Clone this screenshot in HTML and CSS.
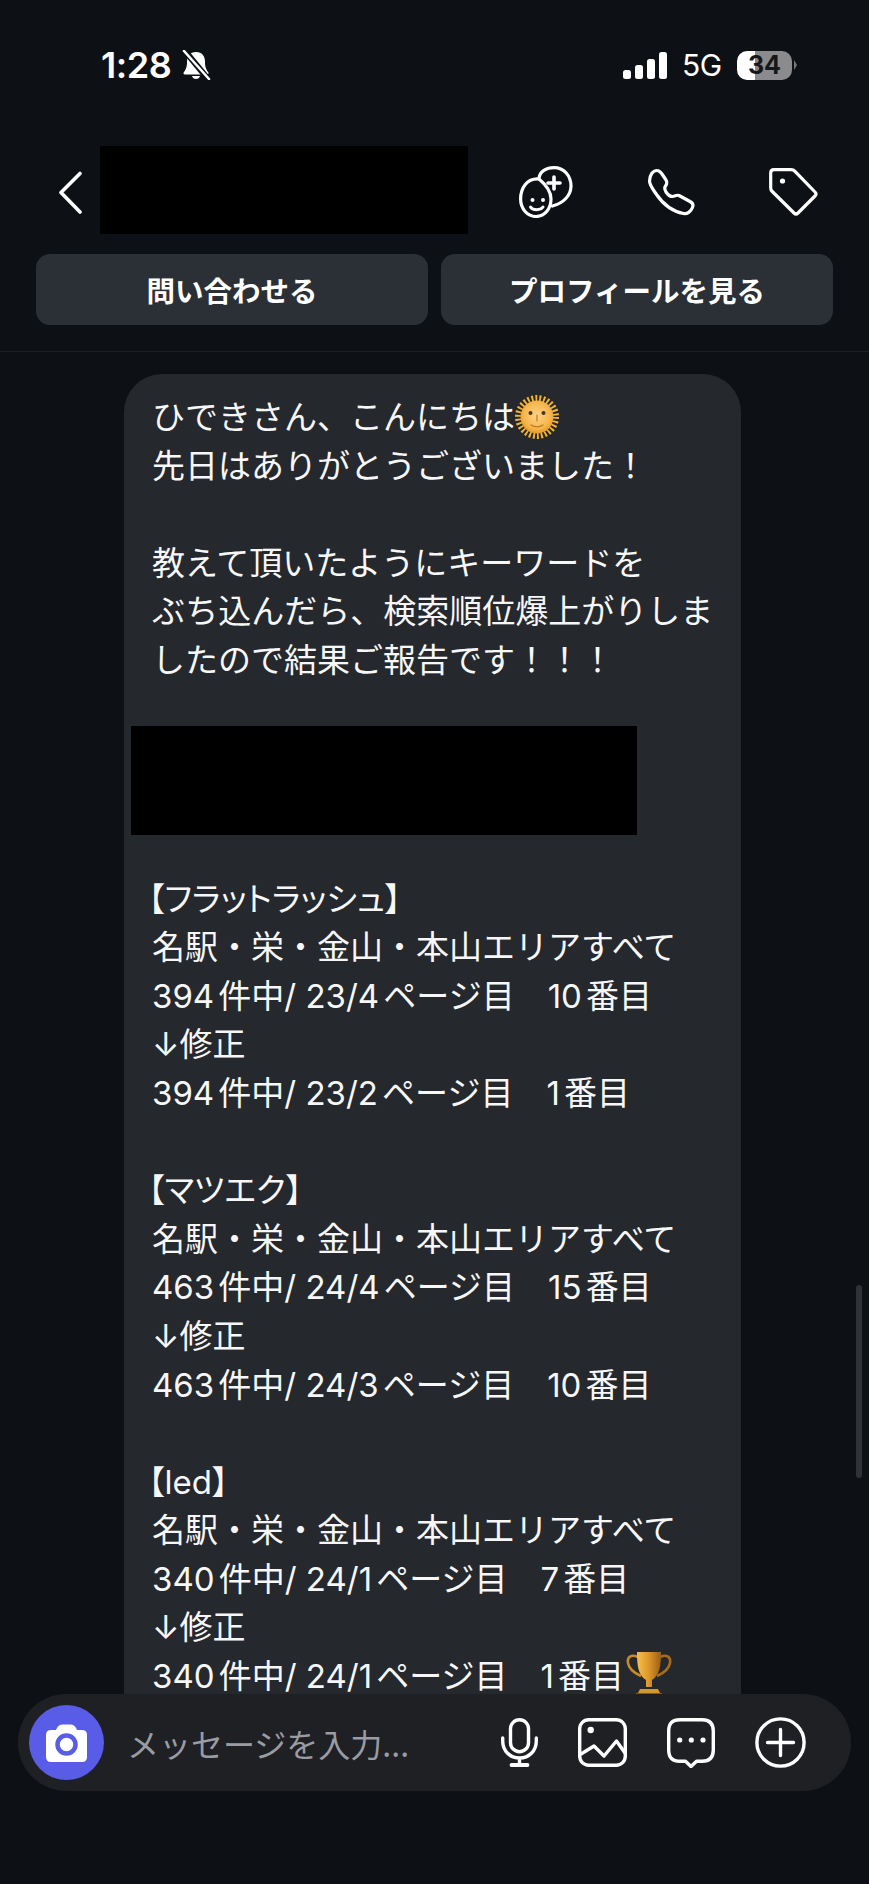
FILE: index.html
```html
<!DOCTYPE html>
<html lang="ja">
<head>
<meta charset="utf-8">
<title>メッセージ</title>
<link rel="stylesheet" href="styles.css">
</head>
<body>
<div class="phone">
  <div class="status">
    <div class="status-left">
      <span class="clock">1:28</span>
      <svg class="bell" viewBox="0 0 30 30"><path d="M15 2c-6 0-9 4-9 10 0 5-1 7-3 10-1 1-.5 2.500 1 2.500h22c1.500 0 2-1.500 1-2.500-2-3-3-5-3-10 0-6-3-10-9-10z" fill="#fff"/><path d="M11 26c.5 2 2 3 4 3s3.500-1 4-3z" fill="#fff"/><path d="M4 1l23 28" stroke="#0d1014" stroke-width="6"/><path d="M3 1l25 28" stroke="#fff" stroke-width="2.600" stroke-linecap="round"/></svg>
    </div>
    <div class="status-right">
      <div class="signal"><i class="b1"></i><i class="b2"></i><i class="b3"></i><i class="b4"></i></div>
      <span class="net">5G</span>
      <div class="battery"><span class="battery-level">34</span></div>
      <span class="battery-tip"></span>
    </div>
  </div>

  <div class="nav">
    <svg class="chevron" viewBox="0 0 24 43"><path d="M22 2.500 3 21.500 22 41" fill="none" stroke="#fff" stroke-width="3.600" stroke-linecap="round" stroke-linejoin="round"/></svg>
    <div class="redact-name"></div>
    <div class="nav-icons">
      <svg class="ic-double" viewBox="0 0 54 52" fill="none" stroke="#fff" stroke-width="3.200" stroke-linecap="round"><path d="M20 13C8 12 1.600 22 1.600 33c0 10 7 17.500 15.400 17.500 9 0 15-8 15-17.500 0-9-6-15-12-20z"/><path d="M20 13c0-8 8-11.400 15-11.400C45 1.600 52 10 52 20c0 9-7 17-18.500 20"/><path d="M35 11v12M29 17h12" stroke-width="3.600"/><path d="M11.500 41c2 3.500 10 3.500 12.500 0" stroke-width="3"/><circle cx="13.500" cy="34" r="2" fill="#fff" stroke="none"/><circle cx="24" cy="34" r="2" fill="#fff" stroke="none"/></svg>
      <svg class="ic-phone" viewBox="0 0 48 48" fill="none" stroke="#fff" stroke-width="3.200" stroke-linejoin="round"><path d="M2.500 13C2.500 7 6 2.500 10 2.500c2 0 3.500 1.500 5 3.500l4 6c1.500 2.500 1 4-.5 6-1.500 2-1 3.500.5 6 2 3 4 4.500 6.500 4.500 2.500 0 4-2 6.500-1l11 6c3 1.500 3.500 3.500 2.500 6-1.500 4-5.500 7-9 6C26 43.500 16 36 9.500 26.500 5 20 2.500 17 2.500 13z"/></svg>
      <svg class="ic-tag" viewBox="0 0 49 48" fill="none" stroke="#fff" stroke-width="3.200" stroke-linejoin="round"><path d="M5 1.700h17q2.500 0 4 1.600l20 20.700q2 2 0 4L29 45q-2 2-4 0L3.300 23.500Q1.700 22 1.700 20V5Q1.700 1.700 5 1.700z"/><circle cx="13.500" cy="13" r="2.600" fill="#fff" stroke="none"/></svg>
    </div>
  </div>

  <div class="actions">
    <button class="action">問い合わせる</button>
    <button class="action">プロフィールを見る</button>
  </div>

  <div class="thread">
    <div class="bubble">
      <div class="line">ひできさん、こんにちは<svg class="sun" viewBox="0 0 44 44"><defs><radialGradient id="sunFace" cx=".5" cy=".45" r=".55"><stop offset="0" stop-color="#fdd487"/><stop offset=".75" stop-color="#f6b54a"/><stop offset="1" stop-color="#e89a22"/></radialGradient></defs><circle cx="22" cy="22" r="19" fill="none" stroke="#f5b42d" stroke-width="6" stroke-dasharray="1.900 2.070"/><circle cx="22" cy="22" r="16.500" fill="url(#sunFace)"/><circle cx="15.500" cy="18" r="2" fill="#4a3420"/><circle cx="28.500" cy="18" r="2" fill="#4a3420"/><path d="M22 20v6M16 30c3.500 2.500 8.500 2.500 12 0" fill="none" stroke="#b97a2a" stroke-width="1.200" stroke-linecap="round"/></svg></div>
      <div class="line">先日はありがとうございました！</div>
      <div class="line"></div>
      <div class="line">教えて頂いたようにキーワードを</div>
      <div class="line">ぶち込んだら、検索順位爆上がりしま</div>
      <div class="line">したので結果ご報告です！！！</div>
      <div class="redact-block"></div>
      <div class="line"><span class="tight heading">【フラットラッシュ】</span></div>
      <div class="line">名駅・栄・金山・本山エリアすべて</div>
      <div class="line">394件中/ 23/4ページ目　10番目</div>
      <div class="line">↓修正</div>
      <div class="line">394件中/ 23/2ページ目　1番目</div>
      <div class="line"></div>
      <div class="line"><span class="tight heading">【マツエク】</span></div>
      <div class="line">名駅・栄・金山・本山エリアすべて</div>
      <div class="line">463件中/ 24/4ページ目　15番目</div>
      <div class="line">↓修正</div>
      <div class="line">463件中/ 24/3ページ目　10番目</div>
      <div class="line"></div>
      <div class="line"><span class="tight heading">【led】</span></div>
      <div class="line">名駅・栄・金山・本山エリアすべて</div>
      <div class="line">340件中/ 24/1ページ目　7番目</div>
      <div class="line">↓修正</div>
      <div class="line">340件中/ 24/1ページ目　1番目<svg class="trophy" viewBox="0 0 46 46"><defs><linearGradient id="gold" x1="0" x2="1" y1="0" y2="0"><stop offset="0" stop-color="#f2c14e"/><stop offset=".45" stop-color="#e09a2c"/><stop offset="1" stop-color="#9c5f14"/></linearGradient></defs><path d="M12 6C5 3 1 6 2 12c1 6 6 10 13 13" fill="none" stroke="#c98a24" stroke-width="2.600"/><path d="M34 6c7-3 11 0 10 6-1 6-6 10-13 13" fill="none" stroke="#a96d1a" stroke-width="2.600"/><path d="M11 1h24c0 13-1 23-9 28v7h-6v-7C12 24 11 14 11 1z" fill="url(#gold)"/><path d="M14 38h18l2 4H12z" fill="#d9962a"/><rect x="10" y="42" width="26" height="4" fill="#8c5313"/></svg></div>
    </div>
  </div>

  <div class="scrollbar"></div>

  <div class="composer">
    <div class="camera">
      <svg class="camera-ic" viewBox="0 0 41 38"><path d="M5 6h5c1-3 3-5.500 6-5.500h9c3 0 5 2.500 6 5.500h5q5 0 5 5v22q0 5-5 5H5q-5 0-5-5V11q0-5 5-5z" fill="#fff"/><circle cx="20.500" cy="20.500" r="9" fill="#fff" stroke="#585ce6" stroke-width="4.500"/></svg>
    </div>
    <span class="placeholder">メッセージを入力...</span>
    <div class="composer-icons">
      <svg class="ic-mic" viewBox="0 0 37 49" fill="none" stroke="#fff" stroke-width="3.400" stroke-linecap="round"><rect x="9.500" y="1.700" width="18" height="32" rx="9"/><path d="M1.700 20v3c0 10 7.300 17 16.800 17s16.800-7 16.800-17v-3M18.500 40v7"/><path d="M10.500 47h16" stroke-width="3.800"/></svg>
      <svg class="ic-img" viewBox="0 0 49 49" fill="none" stroke="#fff" stroke-width="3.400" stroke-linejoin="round" stroke-linecap="round"><rect x="1.700" y="1.700" width="45.600" height="45.600" rx="9"/><circle cx="12.700" cy="12" r="3.200" fill="#fff" stroke="none"/><path d="M3 36l13-8 10 10 12.500-15L47 35"/></svg>
      <svg class="ic-chat" viewBox="0 0 48 50" fill="none" stroke="#fff" stroke-width="3.400" stroke-linejoin="round"><path d="M13 1.700h22Q46.300 1.700 46.300 13v19Q46.300 43.300 35 43.300h-5.500L24 48.500l-5.500-5.200H13Q1.700 43.300 1.700 32V13Q1.700 1.700 13 1.700z"/><circle cx="12.700" cy="22" r="2.600" fill="#fff" stroke="none"/><circle cx="24.300" cy="22" r="2.600" fill="#fff" stroke="none"/><circle cx="36" cy="22" r="2.600" fill="#fff" stroke="none"/></svg>
      <svg class="ic-plus" viewBox="0 0 51 51" fill="none" stroke="#fff" stroke-width="3.400" stroke-linecap="round"><circle cx="25.500" cy="25.500" r="23.600"/><path d="M25.500 12.500v26M12.500 25.500h26"/></svg>
    </div>
  </div>
</div>
</body>
</html>
```

FILE: styles.css
```css
* { box-sizing: border-box; }
html, body { margin: 0; padding: 0; background: #0d1014; }
body { font-family: "Inter", "Noto Sans CJK JP", sans-serif; color: #fff; }
svg { display: block; flex: none; }

.phone {
  position: relative;
  width: 869px;
  height: 1884px;
  overflow: hidden;
  display: flex;
  flex-direction: column;
  background: #0d1014;
}

/* status bar */
.status {
  height: 130px;
  flex: none;
  display: flex;
  align-items: center;
  justify-content: space-between;
  padding: 0 72px 0 101px;
}
.status-left { display: flex; align-items: center; gap: 10px; }
.clock { font-size: 36px; font-weight: 600; letter-spacing: -0.5px; }
.bell { width: 30px; height: 30px; }
.status-right { display: flex; align-items: center; }
.signal { display: flex; align-items: flex-end; gap: 4px; height: 27px; margin-right: 15px; }
.signal i { display: block; width: 8px; background: #fff; border-radius: 2.500px; }
.signal .b1 { height: 9px; }
.signal .b2 { height: 14px; }
.signal .b3 { height: 20px; }
.signal .b4 { height: 27px; }
.net { font-size: 30px; font-weight: 400; width: 38px; margin-right: 17px; letter-spacing: -0.5px; }
.battery {
  width: 55px;
  height: 29px;
  border-radius: 10px;
  background: linear-gradient(90deg, #fff 0, #fff 33%, #8b8b8d 33%, #8b8b8d 100%);
  display: flex;
  align-items: center;
  justify-content: center;
}
.battery-level { font-size: 25px; font-weight: 700; color: #16171a; line-height: 1; }
.battery-tip {
  width: 0;
  height: 0;
  margin-left: 2px;
  border-left: 3px solid #77777a;
  border-top: 5px solid transparent;
  border-bottom: 5px solid transparent;
}

/* navigation */
.nav {
  flex: none;
  height: 108px;
  padding: 16px 51px 0 58px;
  display: flex;
  align-items: center;
}
.chevron { width: 24px; height: 43px; }
.redact-name {
  position: relative;
  align-self: flex-start;
  width: 368px;
  height: 88px;
  margin-left: 18px;
  background: #000;
}
.redact-name::after {
  content: "";
  position: absolute;
  left: 52px;
  top: 86px;
  width: 31px;
  height: 5px;
  border-radius: 0 0 16px 16px;
  background: #3e4146;
  z-index: -1;
}
.nav-icons { margin-left: auto; display: flex; align-items: center; gap: 74px; }
.ic-double { width: 54px; height: 52px; }
.ic-phone { width: 48px; height: 48px; }
.ic-tag { width: 49px; height: 48px; }

/* action buttons */
.actions {
  flex: none;
  display: flex;
  gap: 13px;
  padding: 16px 36px 26px;
  border-bottom: 1px solid #1d2025;
}
.action {
  flex: 1;
  height: 71px;
  border: 0;
  border-radius: 14px;
  background: #2b2f36;
  color: #fff;
  font-family: "Noto Sans CJK JP", sans-serif;
  font-size: 28.500px;
  font-weight: 700;
  padding: 0;
}

/* message thread */
.thread { flex: 1; min-height: 0; overflow: hidden; padding: 22px 0 0 124px; }
.bubble {
  width: 617px;
  min-height: 1400px;
  padding: 19px 28px 0;
  border-radius: 38px 38px 0 0;
  background: #25282d;
  font-size: 33px;
  font-weight: 400;
  color: #f7f7f8;
}
.line {
  position: relative;
  display: flex;
  align-items: center;
  height: 48.600px;
  line-height: 48.600px;
  white-space: pre;
  text-autospace: normal;
}
.tight { font-feature-settings: "palt" 1; }
.heading { margin-left: -4px; }
.sun { width: 44px; height: 44px; margin-left: 0; }
.trophy { width: 46px; height: 46px; margin-left: 2px; transform: translateY(-2px); }
.redact-block {
  width: 506px;
  height: 109px;
  margin: 41px 0 40px -21px;
  background: #000;
}

/* overlays */
.scrollbar {
  position: absolute;
  left: 856px;
  top: 1285px;
  width: 6px;
  height: 193px;
  border-radius: 3px;
  background: #2f3237;
}
.composer {
  position: absolute;
  left: 18px;
  top: 1694px;
  width: 833px;
  height: 97px;
  padding: 0 45px 0 11px;
  border-radius: 48px;
  background: #1f2023;
  display: flex;
  align-items: center;
}
.camera {
  width: 75px;
  height: 75px;
  border-radius: 50%;
  background: #585ce6;
  flex: none;
  display: flex;
  align-items: center;
  justify-content: center;
}
.camera-ic { width: 41px; height: 38px; }
.placeholder {
  margin-left: 23px;
  font-family: "Noto Sans CJK JP", sans-serif;
  font-size: 32px;
  color: #9a9ca3;
  white-space: nowrap;
}
.composer-icons { margin-left: auto; display: flex; align-items: center; gap: 40px; }
.ic-mic { width: 37px; height: 49px; }
.ic-img { width: 49px; height: 49px; }
.ic-chat { width: 48px; height: 50px; }
.ic-plus { width: 51px; height: 51px; }
```
